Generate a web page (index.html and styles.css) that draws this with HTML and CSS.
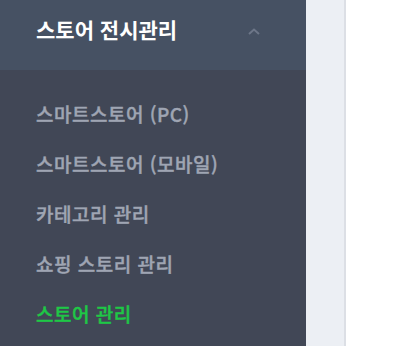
FILE: index.html
```html
<!DOCTYPE html>
<html lang="ko">

<head>
    <meta charset="UTF-8">
    <title>스토어 전시관리</title>
    <link rel="stylesheet" href="styles.css">
</head>

<body>
    <div class="layout">
        <aside class="side-nav">
            <div class="menu-group">
                <div class="menu-title">
                    <span>스토어 전시관리</span>
                    <svg class="chevron" width="12" height="7" viewBox="0 0 12 7">
                        <path d="M1 6 L6 1.5 L11 6" fill="none" stroke="#6d7688" stroke-width="2"/>
                    </svg>
                </div>
                <ul class="sub-menu">
                    <li><a href="#">스마트스토어 (PC)</a></li>
                    <li><a href="#">스마트스토어 (모바일)</a></li>
                    <li><a href="#">카테고리 관리</a></li>
                    <li><a href="#">쇼핑 스토리 관리</a></li>
                    <li class="active"><a href="#">스토어 관리</a></li>
                </ul>
            </div>
        </aside>
        <div class="gutter"></div>
        <main class="content"></main>
    </div>
</body>

</html>
```

FILE: styles.css
```css
body {
    margin: 0;
    padding: 0;
    font-family: "Noto Sans CJK KR", "Noto Sans", sans-serif;
    background-color: #fff;
}

.layout {
    display: flex;
    height: 346px;
    overflow: hidden;
}

.side-nav {
    width: 306px;
    flex-shrink: 0;
    background-color: #414756;
}

.menu-title {
    height: 70px;
    box-sizing: border-box;
    padding: 0 46px 13px 36px;
    display: flex;
    justify-content: space-between;
    align-items: center;
    background-color: #465163;
    color: #fff;
    font-size: 21px;
    font-weight: bold;
}

.chevron {
    display: block;
    margin-top: 5px;
}

.sub-menu {
    list-style: none;
    margin: 0;
    padding: 19px 0 0;
}

.sub-menu li {
    height: 50px;
    line-height: 50px;
    padding-left: 36px;
}

.sub-menu a {
    text-decoration: none;
    color: #9fa5b3;
    font-size: 19px;
    font-weight: 500;
    letter-spacing: 0.5px;
    -webkit-text-stroke: 0.4px currentColor;
}

.sub-menu li.active a {
    color: #1ec846;
}

.gutter {
    width: 38px;
    flex-shrink: 0;
    background-color: #eceff4;
    border-right: 2px solid #dcdfe5;
}

.content {
    flex: 1;
    background-color: #fff;
}
```
